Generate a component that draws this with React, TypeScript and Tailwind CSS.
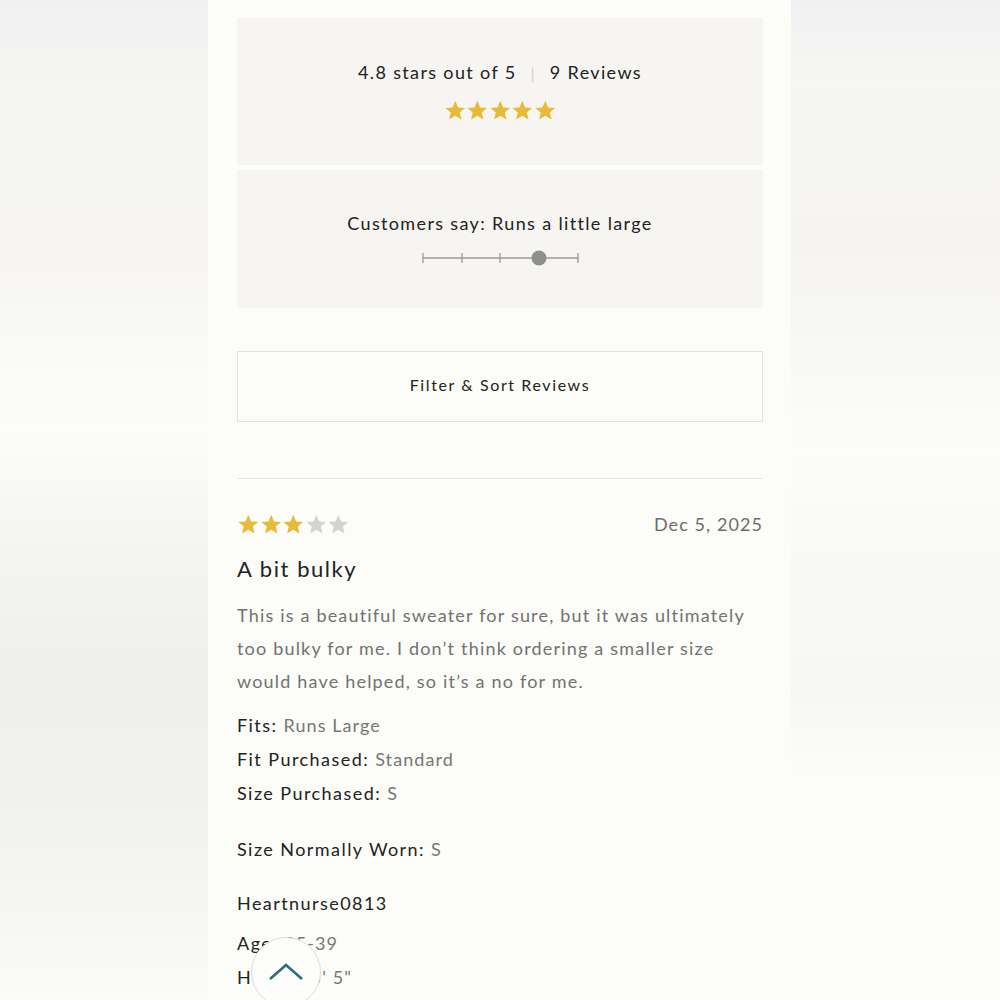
import React from 'react';

const font = { fontFamily: 'Lato, "Noto Sans", sans-serif' };

function Star({ filled }: { filled: boolean }) {
  return (
    <svg viewBox="0 0 24 24" className="w-[22.6px] h-[22.6px]">
      <path
        d="M12 1.8l3 7.1 7.5.6-5.7 4.9 1.8 7.4L12 17.8l-6.6 4 1.8-7.4L1.5 9.5 9 8.9z"
        fill={filled ? '#e8ba3a' : '#d3d3d1'}
      />
    </svg>
  );
}

function Stars({ count }: { count: number }) {
  return (
    <div className="flex">
      {[0, 1, 2, 3, 4].map((i) => (
        <Star key={i} filled={i < count} />
      ))}
    </div>
  );
}

function FitScale() {
  return (
    <svg width="160" height="20" viewBox="0 0 160 20">
      <line x1="2" y1="10" x2="157" y2="10" stroke="#9a9a9a" strokeWidth="1.5" />
      {[2, 41, 79, 157].map((x) => (
        <line key={x} x1={x} y1="5" x2={x} y2="15" stroke="#9a9a9a" strokeWidth="1.3" />
      ))}
      <circle cx="118" cy="10" r="7.5" fill="#8f8f90" />
    </svg>
  );
}

function Detail({ label, value }: { label: string; value: string }) {
  return (
    <p className="text-[18px] leading-[34px] tracking-[0.08em] text-[#222]">
      {label}: <span className="text-[#777] tracking-[0.06em]">{value}</span>
    </p>
  );
}

export default function App() {
  return (
    <div className="w-[1000px] h-[1000px] flex overflow-hidden" style={font}>
      {/* blurred side */}
      <div className="w-[208px] h-full bg-[linear-gradient(180deg,#f1f1f3_0%,#f5f5f2_10%,#f6f5f2_25%,#fbfbf7_38%,#fcfcf8_43%,#f4f4f0_55%,#efefeb_67%,#f1f1ed_80%,#f5f5f1_90%,#fbfbf7_100%)]" />

      {/* Main column */}
      <main className="w-[583px] h-full bg-[#fcfcf8] pl-[29px] pr-[28px] pt-[18px] relative">
        <section className="bg-[#f6f5f2] h-[147px] flex flex-col items-center pt-[41px]">
          <div className="flex items-center text-[18px] tracking-[0.075em] text-[#222]">
            <span>4.8 stars out of 5</span>
            <span className="mx-[14px] text-[#d0d0d0] text-[16px]">|</span>
            <span>9 Reviews</span>
          </div>
          <div className="mt-[13px]">
            <Stars count={5} />
          </div>
        </section>

        <section className="bg-[#f6f5f2] h-[138px] mt-[5px] flex flex-col items-center pt-[40px]">
          <p className="text-[18px] tracking-[0.075em] text-[#222]">Customers say: Runs a little large</p>
          <div className="mt-[11px] ml-[1px]">
            <FitScale />
          </div>
        </section>

        <button className="mt-[43px] w-full h-[71px] pb-[3px] border border-[#e2e2df] text-[16px] tracking-[0.1em] text-[#222] bg-transparent">
          Filter &amp; Sort Reviews
        </button>

        <div className="mt-[56px] border-t border-[#e3e3e0]" />

        <article className="pt-[32px]">
          <div className="flex items-center justify-between">
            <Stars count={3} />
            <span className="text-[18px] tracking-[0.06em] text-[#6d6d6d]">Dec 5, 2025</span>
          </div>
          <h3 className="mt-[14px] text-[22px] tracking-[0.07em] text-[#222]">A bit bulky</h3>
          <p className="mt-[14px] text-[18px] leading-[33px] tracking-[0.066em] text-[#727272]">
            This is a beautiful sweater for sure, but it was ultimately too bulky for me. I don’t think ordering a
            smaller size would have helped, so it’s a no for me.
          </p>
          <div className="mt-[10px]">
            <Detail label="Fits" value="Runs Large" />
            <Detail label="Fit Purchased" value="Standard" />
            <Detail label="Size Purchased" value="S" />
          </div>
          <div className="mt-[22px]">
            <Detail label="Size Normally Worn" value="S" />
          </div>
          <p className="mt-[20px] text-[18px] leading-[34px] tracking-[0.08em] text-[#222]">Heartnurse0813</p>
          <div className="mt-[6px]">
            <Detail label="Age" value="35-39" />
            <Detail label="Height" value="5' 5&quot;" />
          </div>
        </article>

        {/* back to top */}
        <button className="absolute left-[43px] top-[937px] w-[70px] h-[70px] rounded-full bg-[#fdfdfb] border border-[#dcdcd8] flex items-center justify-center">
          <svg width="36" height="20" viewBox="0 0 36 20">
            <path d="M2 17L18 3l16 14" fill="none" stroke="#2b6d7d" strokeWidth="2.6" />
          </svg>
        </button>
      </main>

      <div className="flex-1 h-full bg-[linear-gradient(180deg,#f1f1f3_0%,#f6f6f3_8%,#f5f4f2_25%,#f9f9f6_38%,#fcfcf8_45%,#f8f8f4_58%,#f7f7f3_70%,#fcfcf8_78%,#fcfcf8_100%)]" />
    </div>
  );
}
